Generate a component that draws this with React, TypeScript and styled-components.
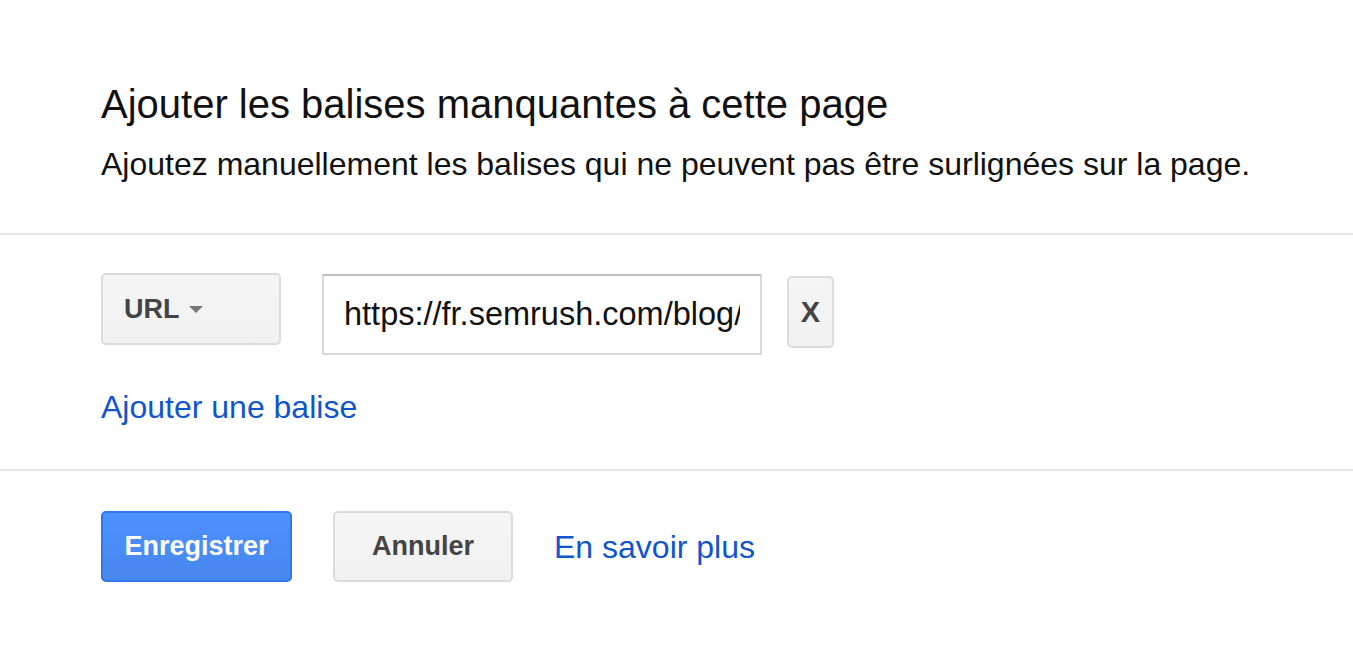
import React from "react";
import styled, { createGlobalStyle } from "styled-components";

const Global = createGlobalStyle`
  html, body { margin: 0; padding: 0; background: #fff; }
  body { font-family: "Liberation Sans", Arial, sans-serif; color: #111; }
`;

const Dialog = styled.div`
  display: flex;
  flex-direction: column;
  width: 1353px;
`;

const Section = styled.div<{ $pt: number; $pb: number }>`
  display: flex;
  flex-direction: column;
  padding: ${(p) => p.$pt}px 101px ${(p) => p.$pb}px;
`;

const Title = styled.h1`
  margin: 0;
  font-size: 40px;
  line-height: 48px;
  font-weight: normal;
  color: #111;
`;

const Subtitle = styled.p`
  margin: 16px 0 0;
  font-size: 32px;
  line-height: 40px;
  color: #111;
`;

const Divider = styled.div`
  height: 2px;
  background: #e8e8e8;
`;

const Row = styled.div`
  display: flex;
  align-items: flex-start;
`;

const Button = styled.button<{ $primary?: boolean; $minWidth?: number; $height?: number }>`
  box-sizing: border-box;
  display: inline-flex;
  align-items: center;
  justify-content: center;
  gap: 9px;
  height: ${(p) => p.$height ?? 71}px;
  min-width: ${(p) => p.$minWidth ?? 0}px;
  padding: 0 20px;
  border-radius: 5px;
  font-family: "Liberation Sans", Arial, sans-serif;
  font-weight: bold;
  font-size: 27px;
  cursor: pointer;
  ${(p) =>
    p.$primary
      ? `
    background: linear-gradient(#4d90fe, #4787ed);
    border: 2px solid #3079ed;
    color: #fff;
  `
      : `
    background: linear-gradient(#f5f5f5, #f1f1f1);
    border: 2px solid #dcdcdc;
    color: #444;
  `}
`;

const Caret = styled.span`
  width: 0;
  height: 0;
  border-left: 7px solid transparent;
  border-right: 7px solid transparent;
  border-top: 7px solid #777;
`;

const UrlButton = styled(Button)`
  justify-content: flex-start;
  padding-left: 21px;
  height: 72px;
`;

const Input = styled.input`
  box-sizing: border-box;
  margin: 1px 0 0 41px;
  width: 440px;
  height: 81px;
  padding: 0 20px;
  border: 2px solid #d9d9d9;
  border-top-color: #c0c0c0;
  font-family: "Liberation Sans", Arial, sans-serif;
  font-size: 32.5px;
  color: #111;
  outline: none;
`;

const RemoveButton = styled(Button)`
  margin: 3px 0 0 25px;
  width: 47px;
  height: 72px;
  padding: 0;
  font-size: 29px;
`;

const Link = styled.a`
  font-size: 32px;
  line-height: 40px;
  color: #1155cc;
  text-decoration: none;
  cursor: pointer;
`;

const AddLink = styled(Link)`
  margin-top: 32px;
  align-self: flex-start;
`;

const Footer = styled.div`
  display: flex;
  align-items: center;
  gap: 41px;
  padding: 40px 101px 0;
`;

export default function App() {
  return (
    <>
      <Global />
      <Dialog>
        <Section $pt={80} $pb={49}>
          <Title>Ajouter les balises manquantes à cette page</Title>
          <Subtitle>
            Ajoutez manuellement les balises qui ne peuvent pas être surlignées sur la page.
          </Subtitle>
        </Section>
        <Divider />
        <Section $pt={38} $pb={42}>
          <Row>
            <UrlButton $minWidth={180}>
              URL
              <Caret />
            </UrlButton>
            <Input defaultValue="https://fr.semrush.com/blog/" />
            <RemoveButton>X</RemoveButton>
          </Row>
          <AddLink>Ajouter une balise</AddLink>
        </Section>
        <Divider />
        <Footer>
          <Button $primary $minWidth={191}>Enregistrer</Button>
          <Button $minWidth={180}>Annuler</Button>
          <Link>En savoir plus</Link>
        </Footer>
      </Dialog>
    </>
  );
}
